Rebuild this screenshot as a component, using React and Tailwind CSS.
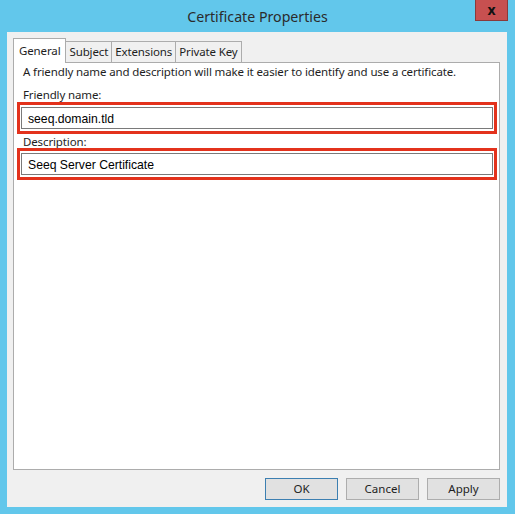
import React from 'react';

const ui = { fontFamily: '"Noto Sans", "Open Sans", sans-serif' };
const field = { fontFamily: '"Liberation Sans", Arial, sans-serif' };

function Tab({ label, active }) {
  if (active) {
    return (
      <div className="relative z-10 -mb-px h-[25px] px-[5px] pt-[4px] bg-white border border-b-0 border-[#acacac] text-[11.5px] tracking-[-0.13px] leading-[16px] text-[#1e1e1e]">
        {label}
      </div>
    );
  }
  return (
    <div className="mt-[3px] h-[21px] -ml-px px-[3px] pt-[2px] bg-[#f0f0f0] border border-[#acacac] border-b-0 text-[11.5px] tracking-[-0.13px] leading-[16px] text-[#1e1e1e]">
      {label}
    </div>
  );
}

function HighlightedField({ value }) {
  return (
    <div className="ml-[3px] mr-[2px] border-[3px] border-[#e3321c] px-px py-[2px]">
      <div
        className="h-[22px] overflow-hidden border border-[#7a7a7a] bg-white pl-[6px] pt-px text-[12.2px] leading-[20px] text-black"
        style={field}
      >
        {value}
      </div>
    </div>
  );
}

function Button({ label, primary }) {
  return (
    <button
      className={
        'w-[73px] h-[22px] bg-[#e1e1e1] border text-[11.5px] leading-[18px] text-[#1e1e1e] ' +
        (primary ? 'border-[#3c7fb1]' : 'border-[#adadad]')
      }
    >
      {label}
    </button>
  );
}

export default function App() {
  return (
    <div className="w-[515px] h-[514px] bg-[#62c7eb] flex flex-col overflow-hidden" style={ui}>
      {/* title bar */}
      <div className="relative h-[32px] shrink-0 flex items-center justify-center">
        <span className="text-[14.2px] text-[#2b2b2b] pt-px">Certificate Properties</span>
        <div className="absolute top-0 left-[475px] w-[33px] h-[21px] bg-[#c75050] border border-t-0 border-[#8a3a3a] flex items-center justify-center">
          <span className="text-[14px] font-bold leading-none text-[#111] -mt-px">x</span>
        </div>
      </div>

      {/* client area */}
      <div className="ml-[7px] mr-[8px] h-[475px] bg-[#f0f0f0] flex flex-col pt-[6px] pl-[6px] pr-[7px]">
        <div className="flex items-start h-[24px]">
          <Tab label="General" active />
          <Tab label="Subject" />
          <Tab label="Extensions" />
          <Tab label="Private Key" />
        </div>

        <div className="h-[408px] bg-white border border-[#acacac] flex flex-col">
          <p className="mt-[2px] pl-[9px] text-[11.5px] tracking-[-0.13px] leading-[14px] text-[#1e1e1e]">
            A friendly name and description will make it easier to identify and use a certificate.
          </p>
          <p className="mt-[9px] pl-[9px] text-[11.5px] tracking-[-0.13px] leading-[14px] text-[#1e1e1e]">Friendly name:</p>
          <HighlightedField value="seeq.domain.tld" />
          <p className="mt-px pl-[9px] text-[11.5px] tracking-[-0.13px] leading-[13px] text-[#1e1e1e]">Description:</p>
          <HighlightedField value="Seeq Server Certificate" />
        </div>

        <div className="mt-[8px] flex justify-end gap-[8px]">
          <Button label="OK" primary />
          <Button label="Cancel" />
          <Button label="Apply" />
        </div>
      </div>
    </div>
  );
}
